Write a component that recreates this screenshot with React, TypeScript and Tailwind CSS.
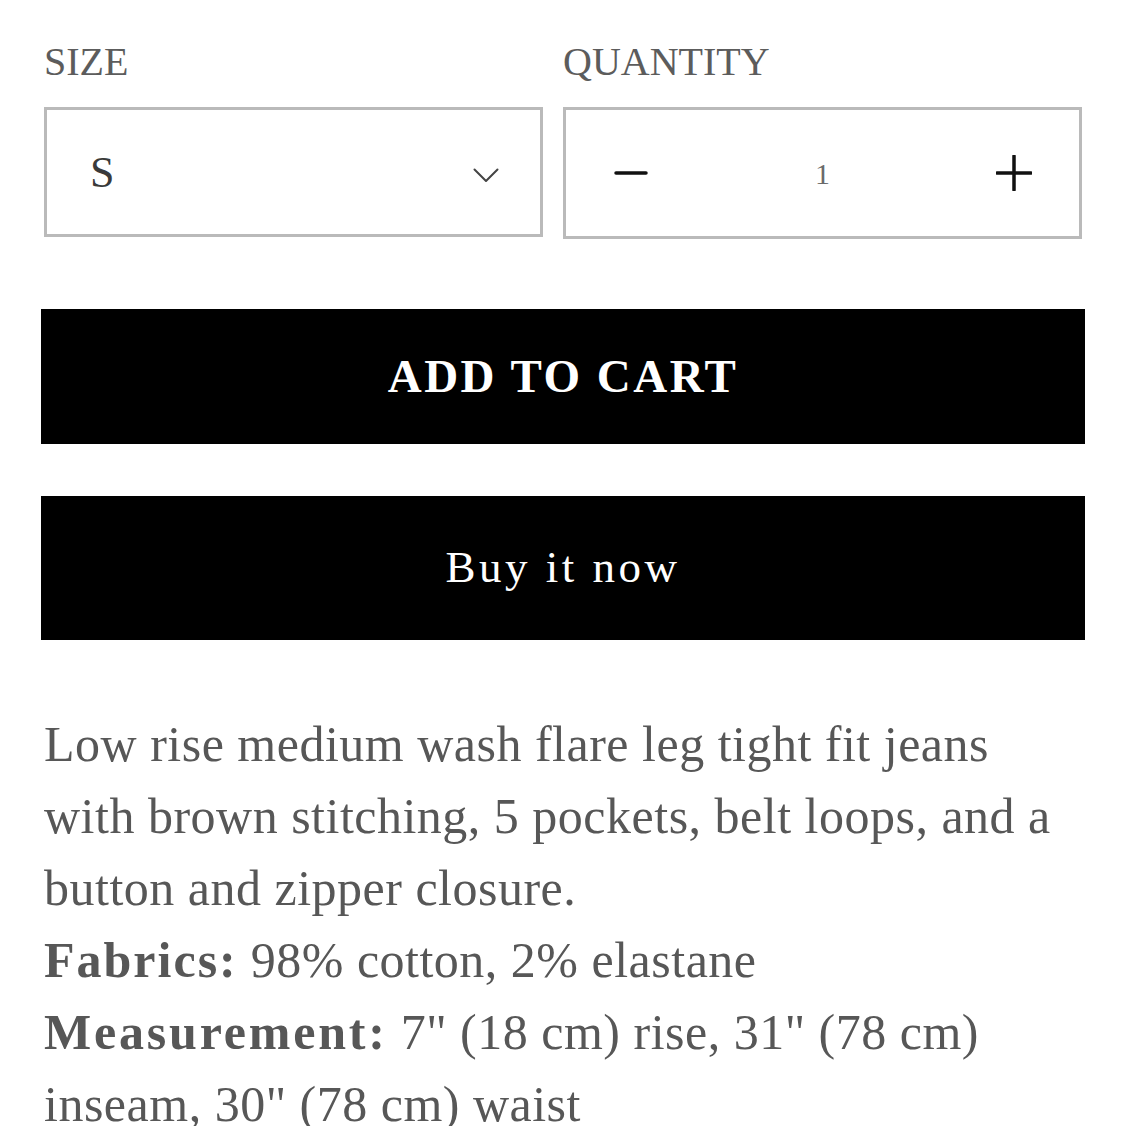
import React, { useState } from 'react';

export default function App() {
  const [qty, setQty] = useState(1);

  return (
    <div className="w-full min-h-screen bg-white pl-[41px] pr-[40px] pt-[40px] font-['Liberation_Serif','DejaVu_Serif',serif]">
      {/* Variant + quantity pickers */}
      <div className="flex gap-[20px] px-[3px]">
        <div className="w-[499px] flex flex-col">
          <label className="text-[40px] leading-[44px] text-[#5c5c5c]">SIZE</label>
          <div className="mt-[23px] h-[130px] border-[3px] border-[#bababa] flex items-center justify-between pl-[43px] pr-[41px]">
            <span className="text-[44px] leading-none text-[#3a3a3a] mt-[2px]">S</span>
            <svg width="26" height="17" viewBox="0 0 26 17" fill="none" className="mt-[6px]">
              <path d="M1.5 2.5 L13 14 L24.5 2.5" stroke="#444" strokeWidth="2" strokeLinecap="round" strokeLinejoin="round" />
            </svg>
          </div>
        </div>
        <div className="flex-1 flex flex-col">
          <label className="text-[40px] leading-[44px] text-[#5c5c5c]">QUANTITY</label>
          <div className="mt-[23px] h-[132px] border-[3px] border-[#bababa] flex items-center justify-between pl-[47px] pr-[47px]">
            <button onClick={() => setQty(Math.max(1, qty - 1))} className="flex items-center">
              <svg width="36" height="36" viewBox="0 0 36 36">
                <path d="M3 18 H33" stroke="#111" strokeWidth="3.5" strokeLinecap="round" />
              </svg>
            </button>
            <span className="text-[30px] text-[#6a6a6a]">{qty}</span>
            <button onClick={() => setQty(qty + 1)} className="flex items-center">
              <svg width="36" height="36" viewBox="0 0 36 36">
                <path d="M1 18 H35 M18 1 V35" stroke="#111" strokeWidth="3.5" strokeLinecap="round" />
              </svg>
            </button>
          </div>
        </div>
      </div>

      {/* Purchase buttons */}
      <button className="mt-[70px] w-full h-[135px] bg-black text-white text-[47px] font-bold tracking-[2.5px] flex items-center justify-center">
        ADD TO CART
      </button>
      <button className="mt-[52px] w-full h-[144px] bg-black text-white text-[45px] tracking-[3.5px] flex items-center justify-center">
        Buy it now
      </button>

      {/* Description */}
      <div className="mt-[68px] pl-[3px] text-[50px] leading-[72px] tracking-[0.5px] text-[#575757] whitespace-nowrap">
        <p>
          Low rise medium wash flare leg tight fit jeans
          <br />
          with brown stitching, 5 pockets, belt loops, and a
          <br />
          button and zipper closure.
        </p>
        <p>
          <strong className="font-bold tracking-[2px]">Fabrics:</strong> 98% cotton, 2% elastane
        </p>
        <p>
          <strong className="font-bold tracking-[2.8px]">Measurement:</strong> 7" (18 cm) rise, 31" (78 cm)
          <br />
          inseam, 30" (78 cm) waist
        </p>
      </div>
    </div>
  );
}
